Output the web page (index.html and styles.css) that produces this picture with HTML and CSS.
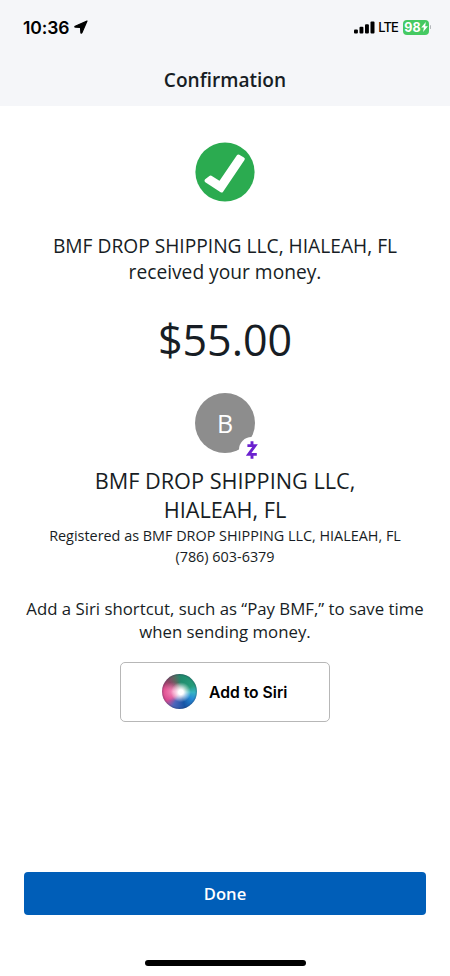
FILE: index.html
```html
<!DOCTYPE html>
<html lang="en">
<head>
<meta charset="utf-8">
<title>Confirmation</title>
<link rel="stylesheet" href="styles.css">
</head>
<body>
<div class="screen">
  <header class="header">
    <div class="status">
      <div class="status-left">
        <span class="time">10:36</span>
        <svg class="location" viewBox="0 0 14 14"><path d="M13 1 1.2 6.2Q.3 6.9 1.4 7.1L6.5 7.4 6.9 12.7Q7.3 13.7 7.9 12.7Z" fill="#000" stroke="#000" stroke-width="1.2" stroke-linejoin="round"/></svg>
      </div>
      <div class="status-right">
        <svg class="signal" viewBox="0 0 21 13"><g fill="#000"><rect x="0" y="8.4" width="3.9" height="4.2" rx="1"/><rect x="5.5" y="5.8" width="3.9" height="6.8" rx="1"/><rect x="11" y="3.2" width="3.9" height="9.4" rx="1"/><rect x="16.5" y=".4" width="4" height="12.2" rx="1"/></g></svg>
        <span class="lte">LTE</span>
        <span class="battery">98<svg class="bolt" viewBox="0 0 7 10"><path d="M4.8 0 .2 5.6H2.9L2.1 10 6.9 4.2H4.2Z" fill="#fff"/></svg></span>
        <span class="battery-cap"></span>
      </div>
    </div>
    <h1 class="title">Confirmation</h1>
  </header>
  <main class="content">
    <svg class="success" viewBox="0 0 60 60"><circle cx="30" cy="30" r="29.6" fill="#2bab50"/><path d="M11.3 38.7 15.5 35.3 25 41.3 43.4 14.3 48 17 26.6 48.7Z" fill="#fff" stroke="#fff" stroke-width="3.6" stroke-linejoin="round"/></svg>
    <p class="message">BMF DROP SHIPPING LLC, HIALEAH, FL<br>received your money.</p>
    <p class="amount">$55.00</p>
    <div class="avatar">
      <span class="initial">B</span>
      <span class="badge"><svg class="zelle" viewBox="0 0 12 18"><path d="M1.4 4.6H9L2.6 13.4H10.8M6 .2V4.4M6 13.6V17.8" fill="none" stroke="#6b21cf" stroke-width="2.9"/></svg></span>
    </div>
    <h2 class="name">BMF DROP SHIPPING LLC,<br>HIALEAH, FL</h2>
    <p class="details">Registered as BMF DROP SHIPPING LLC, HIALEAH, FL<br>(786) 603-6379</p>
    <p class="hint">Add a Siri shortcut, such as “Pay BMF,” to save time<br>when sending money.</p>
    <button class="siri"><span class="orb"></span><span class="siri-label">Add to Siri</span></button>
    <button class="done">Done</button>
  </main>
  <div class="home"></div>
</div>
</body>
</html>
```
FILE: styles.css
```css
* { box-sizing: border-box; }
body { margin: 0; background: #fff; }
h1, h2, p { margin: 0; font-weight: 400; }
.screen { width: 450px; height: 976px; display: flex; flex-direction: column; align-items: center; color: #171d24; font-family: "Open Sans", sans-serif; white-space: nowrap; overflow: hidden; }
.header { width: 450px; height: 106px; background: #f5f6f9; }
.status { height: 54px; padding: 0 19px 0 23px; display: flex; align-items: center; justify-content: space-between; color: #000; font-family: Inter, sans-serif; }
.status-left, .status-right { display: flex; align-items: center; }
.time { font-size: 17.5px; font-weight: 600; letter-spacing: -0.1px; }
.location { width: 14px; height: 14px; margin-left: 5px; }
.signal { width: 21px; height: 13px; }
.lte { margin-left: 3px; font-size: 13px; font-weight: 500; letter-spacing: -0.9px; }
.battery { width: 26px; height: 15px; margin-left: 5px; border-radius: 4px; background: #45c962; color: #fff; display: flex; align-items: center; justify-content: center; font-size: 12.5px; font-weight: 700; }
.bolt { width: 7px; height: 10px; }
.battery-cap { width: 1px; height: 4px; margin-left: 1px; border-radius: 1px; background: #b5b8bc; }
.title { font-size: 19.1px; line-height: 26px; margin-top: 13px; font-weight: 600; text-align: center; }
.content { width: 450px; display: flex; flex-direction: column; align-items: center; text-align: center; }
.success { width: 60px; height: 60px; margin-top: 36px; }
.message { margin-top: 31px; font-size: 19.2px; line-height: 26px; }
.amount { margin-top: 26px; font-size: 43px; line-height: 58px; }
.avatar { position: relative; width: 60px; height: 60px; margin-top: 24px; border-radius: 50%; background: #8d8d8d; color: #fff; display: flex; align-items: center; justify-content: center; }
.initial { font-size: 25px; line-height: 34px; }
.badge { position: absolute; left: 44px; top: 44px; width: 25px; height: 25px; border-radius: 50%; background: #fff; display: flex; align-items: center; justify-content: center; }
.zelle { width: 12px; height: 18px; }
.name { margin-top: 13px; font-size: 21.7px; line-height: 29.3px; }
.details { margin-top: 0; font-size: 14.4px; line-height: 21px; }
.hint { margin-top: 30px; font-size: 16.8px; line-height: 23px; }
.siri { width: 210px; height: 60px; margin: 19px 0 0; padding: 0 0 0 41px; border: 1.5px solid #b7b7b7; border-radius: 5px; background: #fff; display: flex; align-items: center; }
.orb { width: 35px; height: 35px; border-radius: 50%; background: radial-gradient(circle at 54% 52%, #fff 0 9%, rgba(255,255,255,.6) 20%, rgba(255,255,255,0) 38%), radial-gradient(ellipse at 33% 50%, rgba(255,170,210,.75), transparent 38%), radial-gradient(circle, transparent 62%, rgba(35,45,80,.35) 71%), conic-gradient(from 0deg at 54% 52%, #1f8b6c, #259b79 60deg, #36b5c2 90deg, #268bd6 120deg, #1654a5 165deg, #4f66bb 210deg, #da4b91 240deg, #dc3f83 280deg, #8a4664 312deg, #5c6860 335deg, #1f8b6c); }
.siri-label { margin: 2px 0 0 12px; color: #000; font: 600 15.7px/20px Inter, sans-serif; }
.done { width: 402px; height: 43px; margin-top: 150px; padding: 0; border: 0; border-radius: 4px; background: #005eb8; color: #fff; font: 600 16.6px/23px "Open Sans", sans-serif; }
.home { width: 161px; height: 6px; margin-top: 45px; border-radius: 3px; background: #000; flex-shrink: 0; }
```
